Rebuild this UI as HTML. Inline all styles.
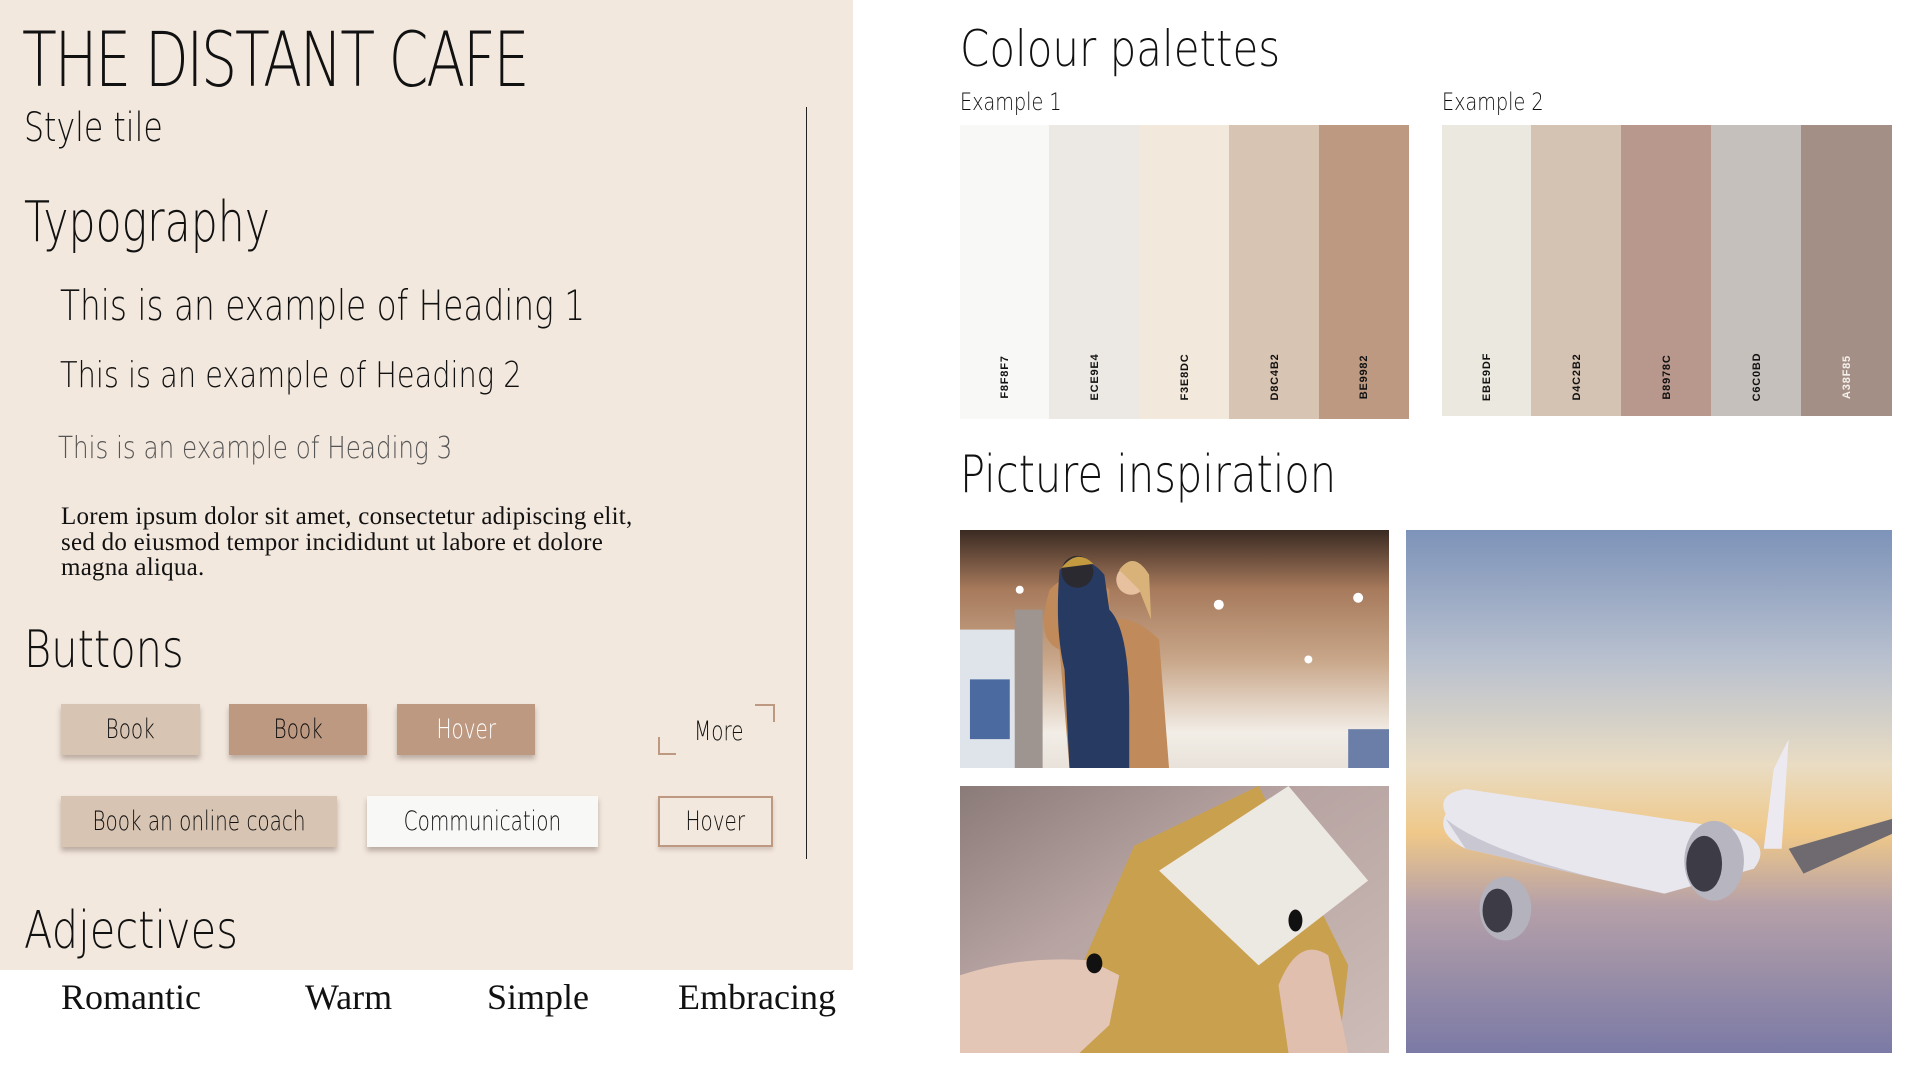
<!DOCTYPE html>
<html><head><meta charset="utf-8">
<style>
*{margin:0;padding:0;box-sizing:border-box}
body{width:1920px;height:1080px;background:#fff;position:relative;overflow:hidden;font-family:"DejaVu Sans ExtraLight","DejaVu Sans",sans-serif;color:#111}
.a{position:absolute;white-space:nowrap;line-height:1}
.t{font-family:"DejaVu Sans ExtraLight","DejaVu Sans",sans-serif;font-weight:200;transform-origin:0 0}
.panel{position:absolute;left:0;top:0;width:853px;height:970px;background:#f3e8de}
.btn{position:absolute;display:flex;align-items:center;justify-content:center;font-family:"DejaVu Sans ExtraLight","DejaVu Sans",sans-serif;font-weight:200;font-size:27px;white-space:nowrap;box-shadow:0 4px 5px rgba(80,60,50,.35)}
.btn span{display:inline-block;transform:scaleX(.74)}
.sw{position:absolute;top:0;height:100%}
.sw span{position:absolute;top:246px;left:50%;width:70px;margin-left:-35px;text-align:center;transform:rotate(-90deg);font:bold 11px "Liberation Sans",sans-serif;letter-spacing:.8px}
.serif{font-family:"Liberation Serif",serif}
</style></head><body>
<div class="panel"></div>
<div class="a t" style="left:22px;top:22px;font-size:76px;transform:scaleX(.75);letter-spacing:-3px">THE DISTANT CAFE</div>
<div class="a t" style="left:24px;top:108px;font-size:40px;transform:scaleX(.79)">Style tile</div>
<div class="a t" style="left:24px;top:195px;font-size:56px;transform:scaleX(.76)">Typography</div>
<div class="a t" style="left:60px;top:285px;font-size:42px;transform:scaleX(.78)">This is an example of Heading 1</div>
<div class="a t" style="left:60px;top:358px;font-size:36px;transform:scaleX(.8)">This is an example of Heading 2</div>
<div class="a t" style="left:58px;top:434px;font-size:30px;color:#555;transform:scaleX(.82)">This is an example of Heading 3</div>
<div class="a serif" style="left:61px;top:504px;font-size:25px;line-height:25.5px;letter-spacing:.25px;color:#111">Lorem ipsum dolor sit amet, consectetur adipiscing elit,<br>sed do eiusmod tempor incididunt ut labore et dolore<br>magna aliqua.</div>
<div class="a" style="left:806px;top:107px;width:1px;height:752px;background:#222"></div>
<div class="a t" style="left:24px;top:624px;font-size:52px;transform:scaleX(.8)">Buttons</div>
<div class="btn" style="left:61px;top:704px;width:139px;height:51px;background:#d8c4b2"><span>Book</span></div>
<div class="btn" style="left:229px;top:704px;width:138px;height:51px;background:#be9982"><span>Book</span></div>
<div class="btn" style="left:397px;top:704px;width:138px;height:51px;background:#be9982;color:#fff"><span>Hover</span></div>
<div class="a" style="left:755px;top:704px;width:20px;height:18px;border-top:2px solid #be9982;border-right:2px solid #be9982"></div>
<div class="a" style="left:658px;top:737px;width:18px;height:18px;border-bottom:2px solid #be9982;border-left:2px solid #be9982"></div>
<div class="a t" style="left:694px;top:718px;font-size:27px;transform:scaleX(.74)">More</div>
<div class="btn" style="left:61px;top:796px;width:276px;height:51px;background:#d8c4b2"><span>Book an online coach</span></div>
<div class="btn" style="left:367px;top:796px;width:231px;height:51px;background:#f8f8f7"><span>Communication</span></div>
<div class="btn" style="left:658px;top:796px;width:115px;height:51px;border:2px solid #be9982;box-shadow:0 3px 4px rgba(80,60,50,.2)"><span>Hover</span></div>
<div class="a t" style="left:24px;top:905px;font-size:52px;transform:scaleX(.8)">Adjectives</div>
<div class="a serif" style="left:61px;top:979px;font-size:36px">Romantic</div>
<div class="a serif" style="left:305px;top:979px;font-size:36px">Warm</div>
<div class="a serif" style="left:487px;top:979px;font-size:36px">Simple</div>
<div class="a serif" style="left:678px;top:979px;font-size:36px">Embracing</div>

<div class="a t" style="left:960px;top:24px;font-size:50px;transform:scaleX(.84)">Colour palettes</div>
<div class="a t" style="left:960px;top:90px;font-size:24px;transform:scaleX(.8)">Example 1</div>
<div class="a t" style="left:1442px;top:90px;font-size:24px;transform:scaleX(.8)">Example 2</div>
<div class="a" style="left:960px;top:125px;width:449px;height:294px">
<div class="sw" style="left:0;width:90px;background:#f8f8f7"><span>F8F8F7</span></div>
<div class="sw" style="left:89px;width:91px;background:#ece9e4"><span>ECE9E4</span></div>
<div class="sw" style="left:179px;width:91px;background:#f3e8dc"><span>F3E8DC</span></div>
<div class="sw" style="left:269px;width:91px;background:#d8c4b2"><span>D8C4B2</span></div>
<div class="sw" style="left:359px;width:90px;background:#be9982"><span>BE9982</span></div>
</div>
<div class="a" style="left:1442px;top:125px;width:450px;height:291px">
<div class="sw" style="left:0;width:90px;background:#ebe9df"><span>EBE9DF</span></div>
<div class="sw" style="left:89px;width:91px;background:#d4c2b2"><span>D4C2B2</span></div>
<div class="sw" style="left:179px;width:91px;background:#b8978c"><span>B8978C</span></div>
<div class="sw" style="left:269px;width:91px;background:#c6c0bd"><span>C6C0BD</span></div>
<div class="sw" style="left:359px;width:91px;background:#a38f85"><span style="color:#f4f0ec">A38F85</span></div>
</div>
<div class="a t" style="left:960px;top:449px;font-size:52px;transform:scaleX(.8)">Picture inspiration</div>

<svg class="a" style="left:960px;top:530px" width="429" height="238" viewBox="0 0 431 239" preserveAspectRatio="none">
<defs><linearGradient id="g1" x1="0" y1="0" x2="0" y2="1"><stop offset="0" stop-color="#3a2a22"/><stop offset=".25" stop-color="#a77a5c"/><stop offset=".55" stop-color="#c9a78a"/><stop offset=".85" stop-color="#f2ede6"/><stop offset="1" stop-color="#e8e2da"/></linearGradient></defs>
<rect width="431" height="239" fill="url(#g1)"/>
<rect x="0" y="100" width="55" height="139" fill="#dfe3ea"/><rect x="10" y="150" width="40" height="60" fill="#4a6aa0"/>
<rect x="55" y="80" width="28" height="159" fill="#9e9490"/>
<path d="M90 60 Q120 30 150 60 L150 90 Q175 85 200 110 L210 239 L110 239 L100 120 Q75 110 90 60Z" fill="#c08a5a"/>
<path d="M100 40 Q125 20 145 45 L150 80 Q170 100 170 180 L170 239 L110 239 L105 140 Q95 100 100 40Z" fill="#273a62"/>
<circle cx="118" cy="42" r="16" fill="#2a2a30"/><path d="M102 38 Q118 18 134 34Z" fill="#c49a40"/>
<circle cx="172" cy="50" r="15" fill="#e7c0a0"/><path d="M160 40 Q175 20 190 45 L192 90 L180 60Z" fill="#d9b27a"/>
<circle cx="60" cy="60" r="4" fill="#fff"/><circle cx="260" cy="75" r="5" fill="#fff"/><circle cx="400" cy="68" r="5" fill="#fff"/><circle cx="350" cy="130" r="4" fill="#fff"/>
<rect x="390" y="200" width="41" height="39" fill="#6a7ea8"/>
</svg>

<svg class="a" style="left:960px;top:786px" width="429" height="267" viewBox="0 0 431 268" preserveAspectRatio="none">
<defs><linearGradient id="g2" x1="0" y1="0" x2="1" y2="1"><stop offset="0" stop-color="#8a7a78"/><stop offset=".4" stop-color="#b7a4a2"/><stop offset="1" stop-color="#cdbcb7"/></linearGradient></defs>
<rect width="431" height="268" fill="url(#g2)"/>
<path d="M175 60 L300 0 L390 180 L380 268 L100 268 L105 220Z" fill="#c9a04e"/>
<path d="M200 85 L330 0 L410 95 L300 180Z" fill="#ece8e2"/>
<path d="M0 190 Q60 170 130 175 L160 190 L150 240 L120 268 L0 268Z" fill="#e4c6b6"/>
<path d="M320 200 Q340 150 370 170 L390 268 L330 268Z" fill="#e0bfae"/>
<ellipse cx="135" cy="178" rx="8" ry="10" fill="#111"/><ellipse cx="337" cy="135" rx="7" ry="11" fill="#111"/>
</svg>

<svg class="a" style="left:1406px;top:530px" width="486" height="523" viewBox="0 0 489 525" preserveAspectRatio="none">
<defs><linearGradient id="g3" x1="0" y1="0" x2="0" y2="1"><stop offset="0" stop-color="#7d93b9"/><stop offset=".25" stop-color="#b9c1cf"/><stop offset=".45" stop-color="#e9dcc3"/><stop offset=".58" stop-color="#efc889"/><stop offset=".72" stop-color="#b5a0a8"/><stop offset="1" stop-color="#7b7aa6"/></linearGradient></defs>
<rect width="489" height="525" fill="url(#g3)"/>
<path d="M385 320 L489 290 L489 305 L400 345Z" fill="#6f6a70"/>
<path d="M370 240 L385 210 L378 320 L360 320Z" fill="#eceaf0"/>
<path d="M40 285 Q30 265 60 260 L330 300 Q370 315 350 340 L260 365 L60 320 Q30 305 40 285Z" fill="#e9e7ee"/>
<path d="M40 290 Q90 330 260 365 L60 320Z" fill="#c9c7d2"/>
<ellipse cx="310" cy="332" rx="30" ry="40" fill="#b7b5c0"/><ellipse cx="300" cy="335" rx="18" ry="28" fill="#3d3c46"/>
<ellipse cx="100" cy="380" rx="26" ry="32" fill="#b4b2bd"/><ellipse cx="92" cy="382" rx="15" ry="22" fill="#3d3c46"/>
</svg>
</body></html>
